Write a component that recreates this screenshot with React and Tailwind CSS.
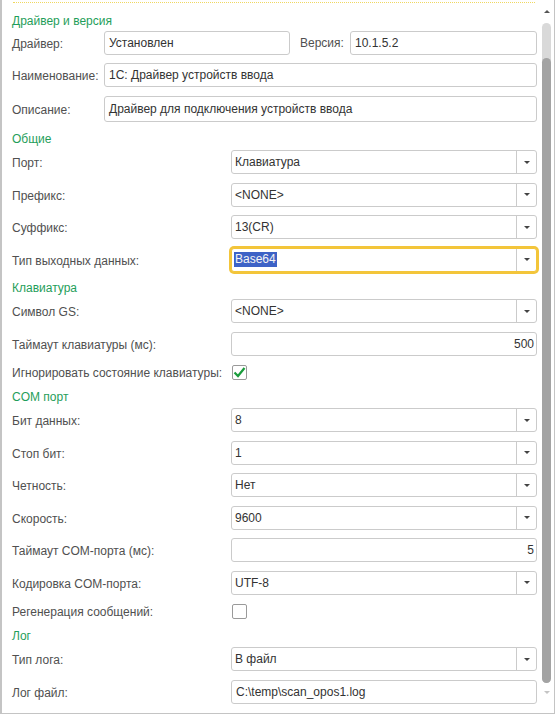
import React from "react";

const Label = ({ children, className = "" }) => (
  <span className={`text-[12px] leading-[16px] text-[#505050] whitespace-nowrap ${className}`}>
    {children}
  </span>
);

const Header = ({ children, className = "" }) => (
  <div className={`h-[16px] text-[12px] leading-[16px] text-[#1f9e5a] ${className}`}>{children}</div>
);

const TextBox = ({ value, right, tall, className = "" }) => (
  <div
    className={`flex items-center border border-[#cbcbcb] rounded-[3px] bg-white text-[12px] text-[#333] ${
      tall ? "h-[26px]" : "h-[24px]"
    } ${right ? "justify-end pr-[2px]" : "pl-[4px]"} ${className}`}
  >
    {value}
  </div>
);

// small down triangle
const Arrow = ({ light }) => (
  <span
    className={`w-0 h-0 border-x-[3px] border-x-transparent border-t-[3px] ${
      light ? "border-t-[#c4c4c4]" : "border-t-[#444]"
    }`}
  />
);

const UpArrow = () => (
  <span className="w-0 h-0 border-x-[3px] border-x-transparent border-b-[3px] border-b-[#555]" />
);

const Select = ({ value, focused }) => (
  <div
    className={`flex h-[24px] rounded-[3px] bg-white text-[12px] text-[#333] ${
      focused ? "border border-[#f3c53a] ring-2 ring-[#f3c53a]" : "border border-[#cbcbcb]"
    }`}
  >
    <div className="flex-1 flex items-center pl-[2px]">
      {focused ? (
        <span className="bg-[#3d62c6] text-[#f4f4f4] px-[1px] leading-[15px]">{value}</span>
      ) : (
        <span className="pl-[1px]">{value}</span>
      )}
    </div>
    <div className="w-[20px] flex items-center justify-center border-l border-[#cbcbcb]">
      <Arrow />
    </div>
  </div>
);

const Check = ({ checked }) => (
  <div className="w-[15px] h-[15px] border border-[#9a9a9a] rounded-[2px] bg-white flex items-center justify-center">
    {checked && (
      <svg width="13" height="13" viewBox="0 0 13 13">
        <path d="M1.5 6.5 L5 10 L11.5 2" fill="none" stroke="#1a9c3c" strokeWidth="2.2" />
      </svg>
    )}
  </div>
);

const Row = ({ label, children, className = "" }) => (
  <div className={`flex items-center ${className}`}>
    <div className="w-[219px] shrink-0">
      <Label>{label}</Label>
    </div>
    <div className="flex-1">{children}</div>
  </div>
);

export default function App() {
  return (
    <div className="w-[555px] h-[714px] flex bg-white border-l-2 border-r border-b border-[#c4c4c4] font-['Liberation_Sans',Arial,sans-serif]">
      <div className="w-[535px] shrink-0 pl-[10px] flex flex-col">
        <div className="h-[3px] ml-[1px] mr-[2px] border-b border-dotted border-[#f0d860]" />

        <Header className="mt-[10px]">Драйвер и версия</Header>
        <div className="flex items-center mt-[2px]">
          <div className="w-[92px] shrink-0">
            <Label>Драйвер:</Label>
          </div>
          <TextBox value="Установлен" className="w-[186px]" />
          <Label className="ml-[10px] w-[50px]">Версия:</Label>
          <TextBox value="10.1.5.2" className="flex-1" />
        </div>
        <div className="flex items-center mt-[8px]">
          <div className="w-[92px] shrink-0">
            <Label>Наименование:</Label>
          </div>
          <TextBox value="1С: Драйвер устройств ввода" className="flex-1" />
        </div>
        <div className="flex items-start mt-[9px]">
          <div className="w-[92px] shrink-0 pt-[1px]">
            <Label>Описание:</Label>
          </div>
          <TextBox value="Драйвер для подключения устройств ввода" tall className="flex-1" />
        </div>

        <Header className="mt-[9px]">Общие</Header>
        <Row label="Порт:" className="mt-[3px]">
          <Select value="Клавиатура" />
        </Row>
        <Row label="Префикс:" className="mt-[8.5px]">
          <Select value="<NONE>" />
        </Row>
        <Row label="Суффикс:" className="mt-[8.5px]">
          <Select value="13(CR)" />
        </Row>
        <Row label="Тип выходных данных:" className="mt-[8.5px]">
          <Select value="Base64" focused />
        </Row>

        <Header className="mt-[8.5px]">Клавиатура</Header>
        <Row label="Символ GS:" className="mt-[3px]">
          <Select value="<NONE>" />
        </Row>
        <Row label="Таймаут клавиатуры (мс):" className="mt-[8.5px]">
          <TextBox value="500" right />
        </Row>
        <Row label="Игнорировать состояние клавиатуры:" className="mt-[8.5px] h-[16px]">
          <div className="pl-[1px]">
            <Check checked />
          </div>
        </Row>

        <Header className="mt-[9px]">COM порт</Header>
        <Row label="Бит данных:" className="mt-[3px]">
          <Select value="8" />
        </Row>
        <Row label="Стоп бит:" className="mt-[8.5px]">
          <Select value="1" />
        </Row>
        <Row label="Четность:" className="mt-[8.5px]">
          <Select value="Нет" />
        </Row>
        <Row label="Скорость:" className="mt-[8.5px]">
          <Select value="9600" />
        </Row>
        <Row label="Таймаут COM-порта (мс):" className="mt-[8.5px]">
          <TextBox value="5" right />
        </Row>
        <Row label="Кодировка COM-порта:" className="mt-[8.5px]">
          <Select value="UTF-8" />
        </Row>
        <Row label="Регенерация сообщений:" className="mt-[8.5px] h-[16px]">
          <div className="pl-[1px]">
            <Check />
          </div>
        </Row>

        <Header className="mt-[9px]">Лог</Header>
        <Row label="Тип лога:" className="mt-[3px]">
          <Select value="В файл" />
        </Row>
        <Row label="Лог файл:" className="mt-[8.5px]">
          <TextBox value="C:\temp\scan_opos1.log" />
        </Row>
      </div>

      {/* scrollbar */}
      <div className="flex-1 flex flex-col items-center pl-[2px] pt-[10px]">
        <UpArrow />
        <div className="mt-[10px] w-[9px] h-[660px] rounded-full bg-[#d9d9d9] flex flex-col">
          <div className="mt-[35px] flex-1 rounded-full bg-[#a3a3a3]" />
        </div>
        <div className="mt-[8px] flex">
          <Arrow light />
        </div>
      </div>
    </div>
  );
}
